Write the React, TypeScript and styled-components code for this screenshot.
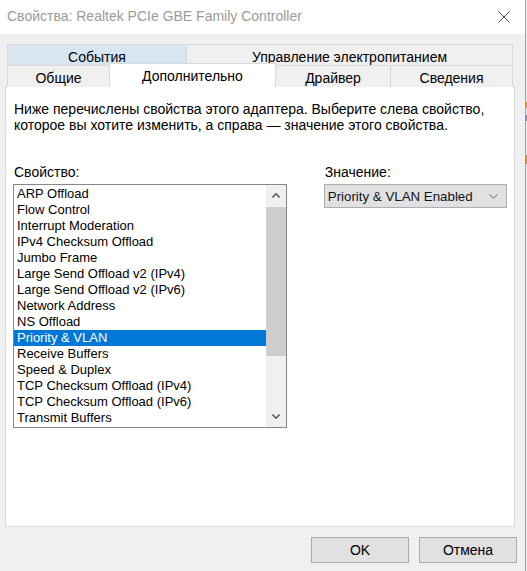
import React from "react";
import styled, { createGlobalStyle } from "styled-components";

const GlobalStyle = createGlobalStyle`
  html, body {
    margin: 0;
    padding: 0;
    background: #ffffff;
  }
  body {
    font-family: "Liberation Sans", Arial, sans-serif;
    font-size: 14px;
    color: #000000;
  }
`;

const Screen = styled.div`
  display: flex;
  width: 527px;
  height: 571px;
  overflow: hidden;
`;

const Window = styled.div`
  width: 525px;
  display: flex;
  flex-direction: column;
  background: #f0f0f0;
  border-right: 1px solid #a0a0a0;
`;

// a sliver of whatever sits behind the dialog
const Behind = styled.div`
  width: 1px;
  background: linear-gradient(
    to bottom,
    #f4f4f4 0px,
    #f4f4f4 102px,
    #e38b2c 102px,
    #e38b2c 108px,
    #f4f4f4 108px,
    #f4f4f4 115px,
    #8a6fa8 115px,
    #8a6fa8 121px,
    #f4f4f4 121px,
    #f4f4f4 155px,
    #d9811c 155px,
    #d9811c 164px,
    #f4f4f4 164px
  );
`;

const TitleBar = styled.div`
  height: 34px;
  flex: none;
  display: flex;
  align-items: center;
  justify-content: space-between;
  padding: 0 15px 2px 7px;
  box-sizing: border-box;
  background: #ffffff;
`;

const Title = styled.div`
  font-size: 14px;
  color: #9b9b9b;
  white-space: nowrap;
`;

const CloseButton = styled.div`
  width: 12px;
  height: 12px;
  display: flex;
  margin-top: 2px;
`;

const Body = styled.div`
  flex: 1;
  display: flex;
  flex-direction: column;
  padding: 10px 9px 8px 5px;
  min-height: 0;
`;

const TabStrip = styled.div`
  margin: 0 3px 0 2px;
  display: flex;
  flex-direction: column;
`;

const TabRow = styled.div`
  display: flex;
  height: 21px;
  align-items: flex-start;
`;

const Tab = styled.div<{ $w: number; $active?: boolean; $hover?: boolean }>`
  width: ${(p) => p.$w}px;
  height: ${(p) => (p.$active ? 24 : 22)}px;
  margin-top: ${(p) => (p.$active ? -2 : 0)}px;
  box-sizing: border-box;
  border: 1px solid #d9d9d9;
  border-bottom: none;
  margin-left: -1px;
  &:first-child {
    margin-left: 0;
  }
  background: ${(p) => (p.$active ? "#ffffff" : p.$hover ? "#d8e6f2" : "#f0f0f0")};
  position: relative;
  z-index: ${(p) => (p.$active ? 2 : 0)};
  display: flex;
  align-items: center;
  justify-content: center;
  padding-top: ${(p) => (p.$active ? 0 : 2)}px;
  white-space: nowrap;
`;

const Panel = styled.div`
  flex: 1;
  margin-right: 1px;
  background: #ffffff;
  border: 1px solid #d9d9d9;
  padding: 14px 7px 0 7px;
  display: flex;
  flex-direction: column;
`;

const Description = styled.div`
  line-height: 16px;
  padding-left: 1px;
  white-space: nowrap;
`;

const Columns = styled.div`
  display: flex;
  margin-top: 31px;
`;

const Column = styled.div<{ $w: number; $gap?: number }>`
  width: ${(p) => p.$w}px;
  margin-left: ${(p) => p.$gap ?? 0}px;
  display: flex;
  flex-direction: column;
`;

const Label = styled.div`
  line-height: 16px;
  padding-left: 1px;
  margin-bottom: 4px;
`;

const ListBox = styled.div`
  height: 244px;
  box-sizing: border-box;
  border: 1px solid #828790;
  background: #ffffff;
  display: flex;
  overflow: hidden;
  font-size: 13px;
`;

const Items = styled.div`
  flex: 1;
  padding-top: 1px;
  overflow: hidden;
`;

const Item = styled.div<{ $selected?: boolean }>`
  height: 16px;
  line-height: 16px;
  padding-left: 3px;
  white-space: nowrap;
  background: ${(p) => (p.$selected ? "#0078d7" : "transparent")};
  color: ${(p) => (p.$selected ? "#ffffff" : "#000000")};
`;

const ScrollBar = styled.div`
  width: 20px;
  background: #f0f0f0;
  display: flex;
  flex-direction: column;
`;

const ScrollArrow = styled.div`
  height: 21px;
  display: flex;
  align-items: center;
  justify-content: center;
`;

const Track = styled.div`
  flex: 1;
  padding-top: 1px;
`;

const Thumb = styled.div<{ $h: number }>`
  height: ${(p) => p.$h}px;
  background: #cdcdcd;
`;

const Select = styled.div`
  height: 24px;
  box-sizing: border-box;
  border: 1px solid #adadad;
  background: #e1e1e1;
  display: flex;
  align-items: center;
  justify-content: space-between;
  padding: 0 8px 0 3px;
  color: #111122;
  font-size: 13.3px;
  white-space: nowrap;
`;

const Footer = styled.div`
  display: flex;
  justify-content: flex-end;
  gap: 10px;
  margin-top: 10px;
  margin-right: -1px;
`;

const Button = styled.div`
  width: 98px;
  height: 26px;
  box-sizing: border-box;
  border: 1px solid #adadad;
  background: #e1e1e1;
  display: flex;
  align-items: center;
  justify-content: center;
`;

const Chevron = ({ up, w = 8, h = 5 }: { up?: boolean; w?: number; h?: number }) => (
  <svg width={w} height={h} viewBox={`0 0 ${w} ${h}`}>
    <polyline
      points={up ? `0.5,${h - 0.5} ${w / 2},0.8 ${w - 0.5},${h - 0.5}` : `0.5,0.5 ${w / 2},${h - 0.8} ${w - 0.5},0.5`}
      fill="none"
      stroke="#606060"
      strokeWidth={up || w === 8 ? 1.6 : 1}
    />
  </svg>
);

const properties = [
  "ARP Offload",
  "Flow Control",
  "Interrupt Moderation",
  "IPv4 Checksum Offload",
  "Jumbo Frame",
  "Large Send Offload v2 (IPv4)",
  "Large Send Offload v2 (IPv6)",
  "Network Address",
  "NS Offload",
  "Priority & VLAN",
  "Receive Buffers",
  "Speed & Duplex",
  "TCP Checksum Offload (IPv4)",
  "TCP Checksum Offload (IPv6)",
  "Transmit Buffers",
];

export default function App() {
  const selected = "Priority & VLAN";

  return (
    <>
      <GlobalStyle />
      <Screen>
        <Window>
          <TitleBar>
            <Title>Свойства: Realtek PCIe GBE Family Controller</Title>
            <CloseButton>
              <svg width="12" height="12" viewBox="0 0 12 12">
                <path d="M0.5 0.5 L11.5 11.5 M11.5 0.5 L0.5 11.5" stroke="#4a4a4a" strokeWidth="1" fill="none" />
              </svg>
            </CloseButton>
          </TitleBar>

          <Body>
            <TabStrip>
              <TabRow>
                <Tab $w={180} $hover>События</Tab>
                <Tab $w={327}>Управление электропитанием</Tab>
              </TabRow>
              <TabRow>
                <Tab $w={103}>Общие</Tab>
                <Tab $w={167} $active>Дополнительно</Tab>
                <Tab $w={116}>Драйвер</Tab>
                <Tab $w={123}>Сведения</Tab>
              </TabRow>
            </TabStrip>

            <Panel>
              <Description>
                Ниже перечислены свойства этого адаптера. Выберите слева свойство,
                <br />
                которое вы хотите изменить, а справа — значение этого свойства.
              </Description>

              <Columns>
                <Column $w={275}>
                  <Label>Свойство:</Label>
                  <ListBox>
                    <Items>
                      {properties.map((name) => (
                        <Item key={name} $selected={name === selected}>
                          {name}
                        </Item>
                      ))}
                    </Items>
                    <ScrollBar>
                      <ScrollArrow>
                        <Chevron up />
                      </ScrollArrow>
                      <Track>
                        <Thumb $h={149} />
                      </Track>
                      <ScrollArrow>
                        <Chevron />
                      </ScrollArrow>
                    </ScrollBar>
                  </ListBox>
                </Column>

                <Column $w={184} $gap={37}>
                  <Label>Значение:</Label>
                  <Select>
                    <span>Priority &amp; VLAN Enabled</span>
                    <Chevron w={9} h={5} />
                  </Select>
                </Column>
              </Columns>
            </Panel>

            <Footer>
              <Button>OK</Button>
              <Button>Отмена</Button>
            </Footer>
          </Body>
        </Window>
        <Behind />
      </Screen>
    </>
  );
}
